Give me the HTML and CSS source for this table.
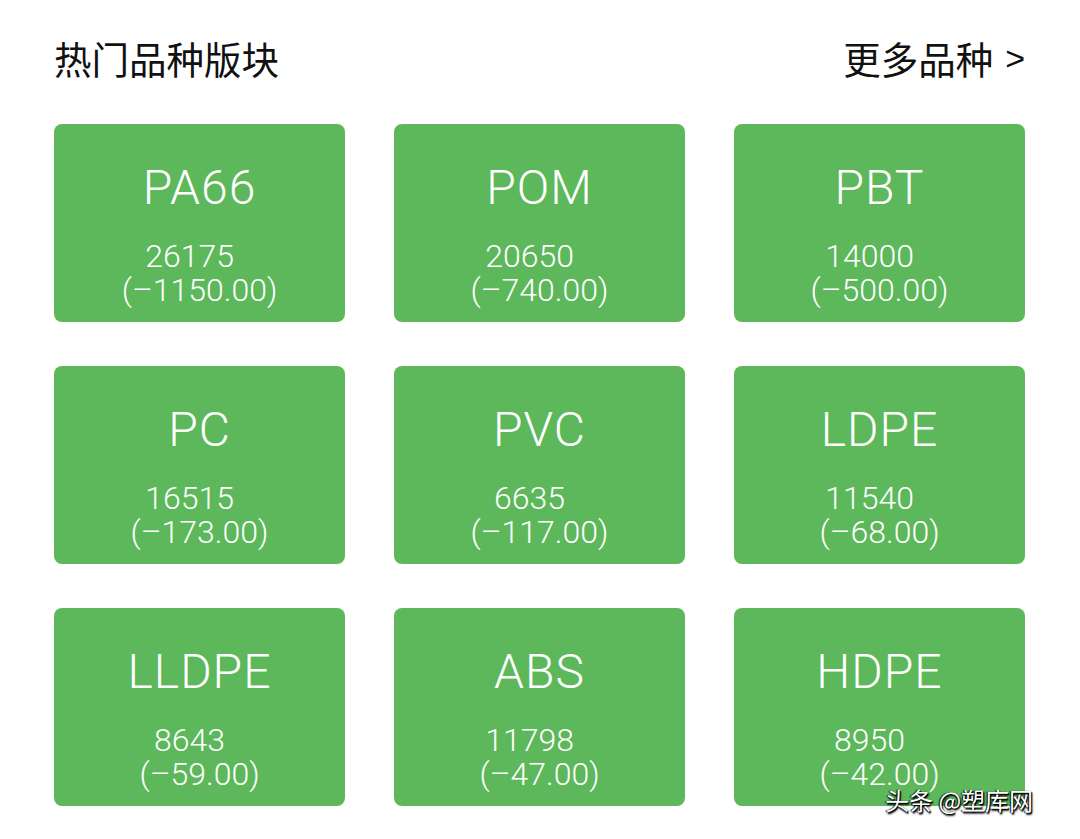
FILE: index.html
```html
<!DOCTYPE html>
<html lang="zh">
<head>
<meta charset="utf-8">
<link rel="stylesheet" href="styles.css">
</head>
<body>
<div class="page">
  <div class="header">
    <div class="title">热门品种版块</div>
    <div class="more"><span>更多品种</span><span class="arrow">&gt;</span></div>
  </div>
  <div class="grid">
    <div class="card"><div class="name">PA66</div><div class="num">26175</div><div class="chg">(–1150.00)</div></div>
    <div class="card"><div class="name">POM</div><div class="num">20650</div><div class="chg">(–740.00)</div></div>
    <div class="card"><div class="name">PBT</div><div class="num">14000</div><div class="chg">(–500.00)</div></div>
    <div class="card"><div class="name">PC</div><div class="num">16515</div><div class="chg">(–173.00)</div></div>
    <div class="card"><div class="name">PVC</div><div class="num">6635</div><div class="chg">(–117.00)</div></div>
    <div class="card"><div class="name">LDPE</div><div class="num">11540</div><div class="chg">(–68.00)</div></div>
    <div class="card"><div class="name">LLDPE</div><div class="num">8643</div><div class="chg">(–59.00)</div></div>
    <div class="card"><div class="name">ABS</div><div class="num">11798</div><div class="chg">(–47.00)</div></div>
    <div class="card"><div class="name">HDPE</div><div class="num">8950</div><div class="chg">(–42.00)</div></div>
  </div>
  <div class="watermark">头条 @塑库网</div>
</div>
</body>
</html>
```
FILE: styles.css
```css
html, body {
  margin: 0;
  padding: 0;
  background: #ffffff;
}
.page {
  position: relative;
  width: 1080px;
  height: 839px;
  overflow: hidden;
  font-family: "Liberation Sans", "Noto Sans CJK SC", sans-serif;
}
.header {
  display: flex;
  justify-content: space-between;
  align-items: center;
  padding: 34px 55px 0 54px;
  height: 48px;
}
.title, .more {
  font-family: "Noto Sans CJK SC", sans-serif;
  font-size: 37.5px;
  color: #111;
  line-height: 48px;
}
.more {
  display: flex;
  align-items: center;
  gap: 12px;
}
.arrow {
  font-family: "Liberation Sans", sans-serif;
  font-size: 34px;
}
.grid {
  display: grid;
  grid-template-columns: repeat(3, 1fr);
  column-gap: 49px;
  row-gap: 44px;
  padding: 42px 55px 0 54px;
}
.card {
  background: #5cb85a;
  border-radius: 8px;
  height: 198px;
  color: #ffffff;
  text-align: center;
  box-sizing: border-box;
  padding-top: 36px;
  font-family: "Roboto", "Liberation Sans", sans-serif;
  font-weight: 300;
}
.name {
  font-size: 48px;
  letter-spacing: 1px;
  line-height: 56px;
  margin-bottom: 23px;
}
.num, .chg {
  font-size: 32px;
  line-height: 34px;
}
.num {
  padding-right: 20px;
}
.watermark {
  position: absolute;
  left: 885px;
  top: 783px;
  font-family: "Noto Sans CJK SC", sans-serif;
  font-size: 24px;
  line-height: 34px;
  color: #fff;
  text-shadow: 1px 1px 1px #000, -1px 0 1px #000, 1px 2px 2px #000;
}
```
